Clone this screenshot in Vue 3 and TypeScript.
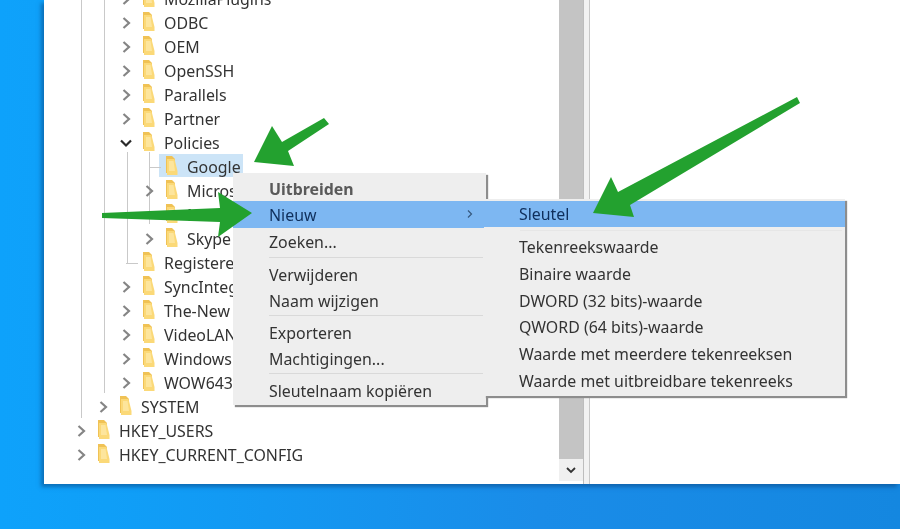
<template>
  <div class="desktop">
    <div class="window">
      <div class="tree-pane">
        <div class="tree">
          <i class="guide g-root"></i>
          <i class="guide g-system"></i>
          <i class="guide g-policies"></i>
          <i class="guide g-google"></i>
          <div
            v-for="row in rows"
            :key="row.name"
            class="row"
            :class="[`level-${row.level}`, { selected: row.selected }]"
          >
            <span class="twisty">
              <svg v-if="row.state" width="14" height="14" viewBox="0 0 14 14">
                <path v-if="row.state === 'closed'" d="M4.5 2 L10 7 L4.5 12" class="chev" />
                <path v-else d="M2 4.5 L7 9.5 L12 4.5" class="chev open" />
              </svg>
              <i v-else class="stub"></i>
            </span>
            <svg class="folder" width="13" height="19" viewBox="0 0 13 19">
              <path d="M1 0 H7 L9 2 L10 3 V17 H1 Z" fill="#f0c255" />
              <path d="M2 3 H9.5 L12.5 15 V19 H2 Z" fill="#fbd978" />
              <path d="M4 5 H8.5 L10 15 H4 Z" fill="#fde59c" />
            </svg>
            <span class="label">{{ row.name }}</span>
          </div>
        </div>
        <div class="scrollbar">
          <div class="thumb"></div>
          <div class="scroll-down">
            <svg width="12" height="8" viewBox="0 0 12 8">
              <path d="M2 2 L6 6 L10 2" fill="none" stroke="#333" stroke-width="1.8" />
            </svg>
          </div>
        </div>
      </div>
      <div class="splitter"></div>
      <div class="value-pane"></div>
    </div>

    <ul class="menu main-menu">
      <template v-for="item in mainMenu" :key="item.label">
        <li v-if="item.sep" class="sep"></li>
        <li class="item" :class="{ bold: item.bold, active: item.active }" :style="{ height: item.h + 'px' }">
          {{ item.label }}
          <svg v-if="item.active" class="more" width="8" height="10" viewBox="0 0 8 10">
            <path d="M2 1.5 L5.5 5 L2 8.5" fill="none" stroke="#36587e" stroke-width="1.2" />
          </svg>
        </li>
      </template>
    </ul>

    <ul class="menu sub-menu">
      <template v-for="item in subMenu" :key="item.label">
        <li v-if="item.sep" class="sep"></li>
        <li class="item" :class="{ active: item.active }" :style="{ height: item.h + 'px' }">{{ item.label }}</li>
      </template>
    </ul>

    <svg class="arrows" width="900" height="529" viewBox="0 0 900 529">
      <polygon points="324,118 329,124 288,151 294,166 254,162 272,126 282,142" />
      <polygon points="102,213 220,208 218,192 252,213 218,237 220,222 102,218" />
      <polygon points="797,97 800,103 630,205 634,217 593,213 611,177 618,192" />
    </svg>
  </div>
</template>

<script setup lang="ts">
type RowState = 'closed' | 'open' | null;

interface TreeRow {
  name: string;
  level: number;
  state: RowState;
  selected?: boolean;
}

interface MenuItem {
  label: string;
  h: number;
  bold?: boolean;
  active?: boolean;
  sep?: boolean;
}

// names are cut where the context menu covers them
const rows: TreeRow[] = [
  { name: 'MozillaPlugins', level: 3, state: 'closed' },
  { name: 'ODBC', level: 3, state: 'closed' },
  { name: 'OEM', level: 3, state: 'closed' },
  { name: 'OpenSSH', level: 3, state: 'closed' },
  { name: 'Parallels', level: 3, state: 'closed' },
  { name: 'Partner', level: 3, state: 'closed' },
  { name: 'Policies', level: 3, state: 'open' },
  { name: 'Google', level: 4, state: null, selected: true },
  { name: 'Micros', level: 4, state: 'closed' },
  { name: 'Mozilla', level: 4, state: null },
  { name: 'Skype', level: 4, state: 'closed' },
  { name: 'Registere', level: 3, state: null },
  { name: 'SyncInteg', level: 3, state: 'closed' },
  { name: 'The-New', level: 3, state: 'closed' },
  { name: 'VideoLAN', level: 3, state: 'closed' },
  { name: 'Windows', level: 3, state: 'closed' },
  { name: 'WOW643', level: 3, state: 'closed' },
  { name: 'SYSTEM', level: 2, state: 'closed' },
  { name: 'HKEY_USERS', level: 1, state: 'closed' },
  { name: 'HKEY_CURRENT_CONFIG', level: 1, state: 'closed' },
];

const mainMenu: MenuItem[] = [
  { label: 'Uitbreiden', h: 25, bold: true },
  { label: 'Nieuw', h: 27, active: true },
  { label: 'Zoeken...', h: 28 },
  { label: 'Verwijderen', h: 26, sep: true },
  { label: 'Naam wijzigen', h: 26 },
  { label: 'Exporteren', h: 26, sep: true },
  { label: 'Machtigingen...', h: 26 },
  { label: 'Sleutelnaam kopiëren', h: 26, sep: true },
];

const subMenu: MenuItem[] = [
  { label: 'Sleutel', h: 26, active: true },
  { label: 'Tekenreekswaarde', h: 26, sep: true },
  { label: 'Binaire waarde', h: 27 },
  { label: 'DWORD (32 bits)-waarde', h: 27 },
  { label: 'QWORD (64 bits)-waarde', h: 26 },
  { label: 'Waarde met meerdere tekenreeksen', h: 27 },
  { label: 'Waarde met uitbreidbare tekenreeks', h: 27 },
];
</script>

<style scoped>
.desktop {
  position: relative;
  width: 900px;
  height: 529px;
  overflow: hidden;
  padding-left: 44px;
  box-sizing: border-box;
  background: linear-gradient(90deg, #0ea2fb 0, #0f9ff8 12%, #1a8ce8 60%, #1487e0 100%);
  font-family: "Noto Sans", "Open Sans", sans-serif;
  color: #333;
  filter: blur(0.4px);
}

.window {
  display: flex;
  height: 484px;
  background: #fff;
  box-shadow: -3px 3px 4px rgba(10, 70, 130, 0.55);
}

.tree-pane {
  display: flex;
  width: 539px;
  flex: none;
}

.tree {
  position: relative;
  flex: 1;
  margin-top: -13px;
}

.scrollbar {
  display: flex;
  flex-direction: column;
  width: 24px;
  padding-bottom: 3px;
  box-sizing: border-box;
}

.thumb {
  flex: 1;
  background: #c4c4c4;
}

.scroll-down {
  height: 22px;
  display: flex;
  align-items: center;
  justify-content: center;
  background: #f0f0f0;
}

.splitter {
  width: 7px;
  flex: none;
  background: #f2f2f2;
  border-left: 1px solid #bdbdbd;
  border-right: 1px solid #c8c8c8;
  box-sizing: border-box;
}

.value-pane {
  flex: 1;
}

.row {
  position: relative;
  display: flex;
  align-items: center;
  height: 24px;
  font-size: 15.9px;
  white-space: nowrap;
}

.row.selected::before {
  content: "";
  position: absolute;
  left: 115px;
  top: -1px;
  width: 84px;
  height: 23px;
  background: #cce4f7;
}

.row > * {
  position: relative;
}

.level-1 { padding-left: 30px; }
.level-2 { padding-left: 52px; }
.level-3 { padding-left: 75px; }
.level-4 { padding-left: 98px; }

.twisty {
  display: flex;
  align-items: center;
  justify-content: center;
  width: 14px;
  height: 24px;
  flex: none;
}

.chev {
  fill: none;
  stroke: #858585;
  stroke-width: 2.2;
}

.chev.open {
  stroke: #2a2a2a;
}

.stub {
  display: block;
  flex: none;
  width: 12px;
  height: 1px;
  margin-left: 12px;
  background: #c9c9c9;
}

.folder {
  flex: none;
  margin: -3px 0 0 9px;
}

.label {
  margin-left: 9px;
  line-height: 24px;
}

.guide {
  position: absolute;
  display: block;
  width: 1px;
  background: #c9c9c9;
}

.g-root { left: 37px; top: 0; height: 431px; }
.g-system { left: 60px; top: 0; height: 406px; }
.g-policies { left: 83px; top: 165px; height: 111px; }
.g-google { left: 105px; top: 165px; height: 72px; }

.menu {
  position: absolute;
  margin: 0;
  padding: 0;
  list-style: none;
  background: #eeeeee;
  box-shadow: 2px 2px 1px #8d8d8d;
  font-size: 15.9px;
  color: #333;
  box-sizing: border-box;
}

.main-menu {
  left: 233px;
  top: 173px;
  width: 253px;
  height: 232px;
  padding-top: 3px;
}

.sub-menu {
  left: 484px;
  top: 199px;
  width: 361px;
  height: 197px;
  padding-top: 2px;
}

.item {
  position: relative;
  display: flex;
  align-items: center;
  padding-left: 36px;
  white-space: nowrap;
}

.sub-menu .item {
  padding-left: 35px;
}

.item.bold {
  font-weight: 700;
  color: #5a5a5a;
}

.item.active {
  background: #7db7f2;
  color: #0f2f5c;
}

.more {
  position: absolute;
  right: 12px;
  top: 8px;
}

.sep {
  height: 1px;
  margin: 1px 3px 4px 36px;
  background: #d9d9d9;
}

.sub-menu .sep {
  margin: 3px 3px 3px 36px;
  background: #e6e6e6;
}

.arrows {
  position: absolute;
  left: 0;
  top: 0;
  pointer-events: none;
  fill: #23a12f;
}
</style>

<style>
html, body {
  margin: 0;
  background: #1487e0;
}
</style>
